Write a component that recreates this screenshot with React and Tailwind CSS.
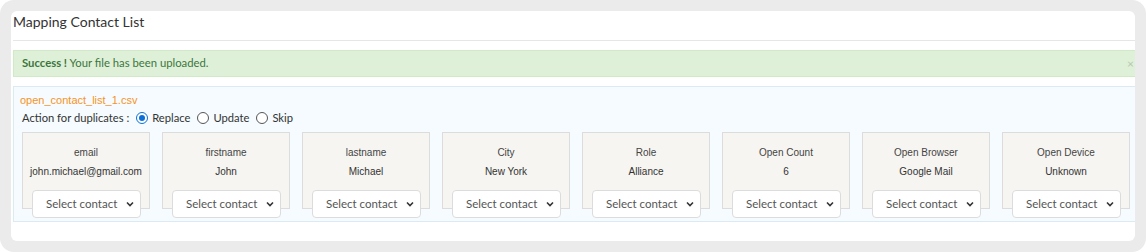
import React, { useState } from 'react';

const columns = [
  { field: 'email', value: 'john.michael@gmail.com' },
  { field: 'firstname', value: 'John' },
  { field: 'lastname', value: 'Michael' },
  { field: 'City', value: 'New York' },
  { field: 'Role', value: 'Alliance' },
  { field: 'Open Count', value: '6' },
  { field: 'Open Browser', value: 'Google Mail' },
  { field: 'Open Device', value: 'Unknown' },
];

const Radio = ({ checked, label, onClick }) => (
  <label className="flex items-center cursor-pointer" onClick={onClick}>
    <span
      className={
        checked
          ? 'w-[12px] h-[12px] rounded-full border-[1.5px] border-[#0b6fd8] flex items-center justify-center bg-white'
          : 'w-[12px] h-[12px] rounded-full border border-[#555] bg-white'
      }
    >
      {checked && <span className="w-[6px] h-[6px] rounded-full bg-[#0b6fd8]" />}
    </span>
    <span className="ml-[4px]">{label}</span>
  </label>
);

const ColumnCard = ({ field, value }) => (
  <div className="w-[128px] shrink-0 flex flex-col">
    <div className="h-[77px] bg-[#f6f5f1] border border-[#dcdcdc] text-center text-[10px] leading-[12px] text-[#444] font-['Liberation_Sans',Arial,sans-serif]">
      <div className="pt-[14px]">{field}</div>
      <div className="mt-[7px] text-[#333]">{value}</div>
    </div>
    <div className="relative -mt-[19px] ml-[10px] w-[109px] h-[28px] bg-white border border-[#dcdcdc] rounded-[4px] flex items-center justify-between pl-[13px] pr-[6px] text-[11.5px] whitespace-nowrap text-[#555]">
      <span>Select contact</span>
      <svg width="8" height="6" viewBox="0 0 8 6" fill="none">
        <path d="M1 1.5L4 4.5L7 1.5" stroke="#333" strokeWidth="1.6" />
      </svg>
    </div>
  </div>
);

export default function App() {
  const [action, setAction] = useState('replace');

  return (
    <div className="w-[1146px] h-[252px] bg-white">
      <div className="h-full rounded-[14px] bg-[#ebebeb] p-[11px]">
        <div className="h-full rounded-[6px] bg-white overflow-hidden pl-[2px] font-['Lato','Open_Sans',sans-serif]">
          <div className="w-[1140px]">
            <div className="pt-[1px] pb-[8px] leading-[20px] text-[14px] text-[#333] border-b border-[#e6e6e6]">
              Mapping Contact List
            </div>

            <div className="mt-[9px] h-[27px] bg-[#dff0d8] border border-[#d0e9c6] flex items-center justify-between pl-[8px] pr-[18px] text-[11.3px] text-[#3c763d]">
              <div>
                <span className="font-bold">Success !</span> Your file has been uploaded.
              </div>
              <span className="text-[#b5c9b0] text-[12px]">×</span>
            </div>

            <div className="mt-[9px] h-[136px] bg-[#f5fbfe] border border-[#dbebf3] px-[6px]">
              <div className="pt-[6px] text-[11px] leading-[14px] text-[#f7931e] font-['Liberation_Sans',Arial,sans-serif]">
                open_contact_list_1.csv
              </div>
              <div className="mt-[3px] ml-[2px] flex items-center gap-[7px] text-[11.2px] leading-[16px] text-[#333]">
                <span>Action for duplicates :</span>
                <Radio checked={action === 'replace'} label="Replace" onClick={() => setAction('replace')} />
                <Radio checked={action === 'update'} label="Update" onClick={() => setAction('update')} />
                <Radio checked={action === 'skip'} label="Skip" onClick={() => setAction('skip')} />
              </div>
              <div className="mt-[6px] ml-[2px] flex gap-[12px]">
                {columns.map((c) => (
                  <ColumnCard key={c.field} field={c.field} value={c.value} />
                ))}
              </div>
            </div>
          </div>
        </div>
      </div>
    </div>
  );
}
